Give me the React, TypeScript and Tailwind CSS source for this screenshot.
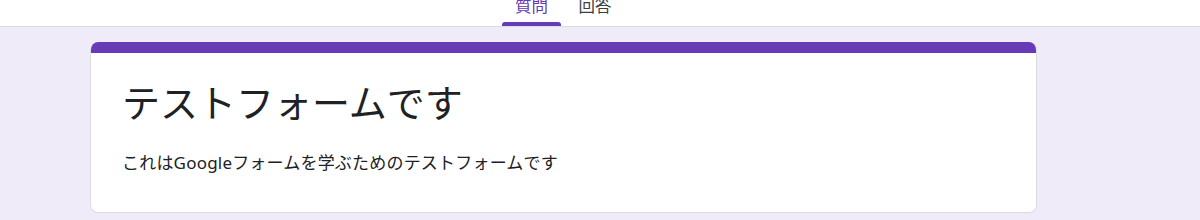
const tabs = [
  { label: '質問', active: true },
  { label: '回答', active: false },
];

function Header() {
  return (
    <div className="h-[27px] overflow-hidden border-b border-[#dadce0] bg-white">
      <div className="flex h-[26px] pl-[502px]">
        {tabs.map((tab) => (
          <div
            key={tab.label}
            className={
              tab.active
                ? 'relative flex w-[59px] justify-center'
                : 'relative ml-[17px] flex w-[34px] justify-center'
            }
          >
            <span
              className={
                tab.active
                  ? 'mt-[-2px] text-[16.5px] leading-none text-[#673ab7]'
                  : 'mt-[-2px] text-[16.5px] leading-none text-[#3c4043]'
              }
            >
              {tab.label}
            </span>
            {tab.active && (
              <span className="absolute bottom-0 left-0 h-[4px] w-full rounded-t-[3px] bg-[#673ab7]" />
            )}
          </div>
        ))}
      </div>
    </div>
  );
}

function FormHeaderCard() {
  return (
    <div className="ml-[90px] w-[947px] overflow-hidden rounded-[8px] border border-t-0 border-[#dadce0] bg-white">
      <div className="h-[11px] bg-[#673ab7]" />
      <div className="px-[31px] pt-[30px] pb-[41px]">
        <h1 className="text-[38px] leading-none text-[#202124]">テストフォームです</h1>
        <p className="mt-[33px] text-[17px] leading-none tracking-[0.2px] text-[#202124]">
          これはGoogleフォームを学ぶためのテストフォームです
        </p>
      </div>
    </div>
  );
}

export default function App() {
  return (
    <div
      className="h-[220px] w-[1200px] overflow-hidden bg-[#f0ebf8]"
      style={{ fontFamily: '"Noto Sans", "Noto Sans CJK JP", sans-serif' }}
    >
      <Header />
      <div className="pt-[15px]">
        <FormHeaderCard />
      </div>
    </div>
  );
}
